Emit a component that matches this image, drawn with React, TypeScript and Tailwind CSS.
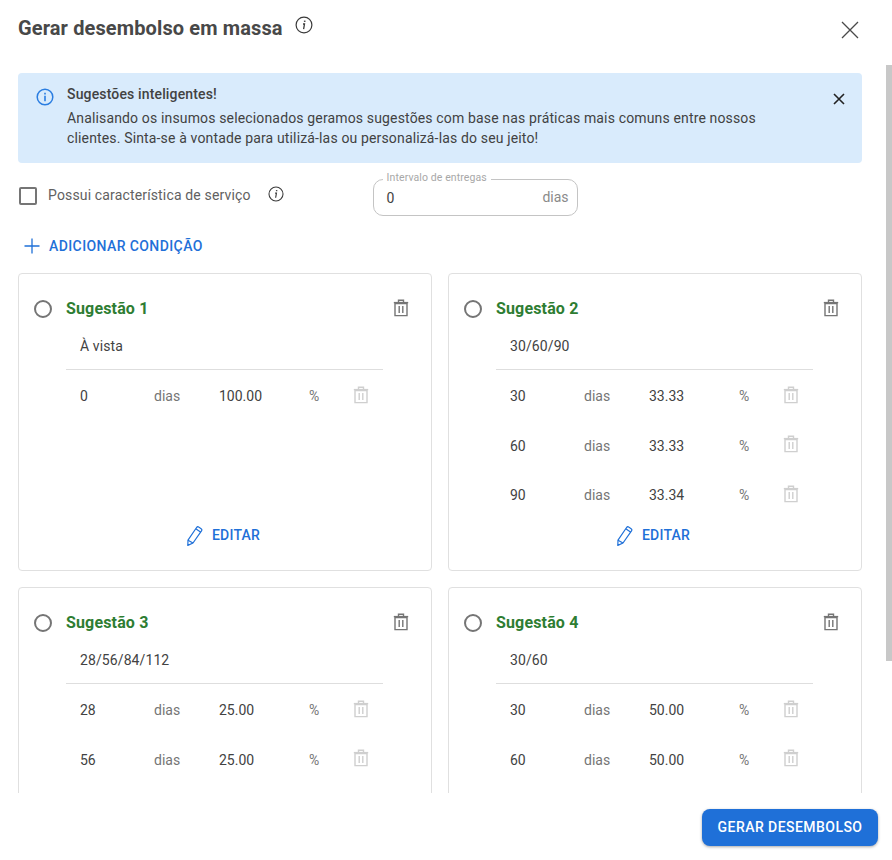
const font = { fontFamily: "Roboto, 'Liberation Sans', sans-serif" };

type Row = { days: string; pct: string };
type Sugestao = { title: string; name: string; rows: Row[]; editar: boolean };

const sugestoes: Sugestao[] = [
  { title: "Sugestão 1", name: "À vista", editar: true, rows: [{ days: "0", pct: "100.00" }] },
  {
    title: "Sugestão 2",
    name: "30/60/90",
    editar: true,
    rows: [
      { days: "30", pct: "33.33" },
      { days: "60", pct: "33.33" },
      { days: "90", pct: "33.34" },
    ],
  },
  {
    title: "Sugestão 3",
    name: "28/56/84/112",
    editar: false,
    rows: [
      { days: "28", pct: "25.00" },
      { days: "56", pct: "25.00" },
    ],
  },
  {
    title: "Sugestão 4",
    name: "30/60",
    editar: false,
    rows: [
      { days: "30", pct: "50.00" },
      { days: "60", pct: "50.00" },
    ],
  },
];

function InfoItalic({ size }: { size: number }) {
  return (
    <svg width={size} height={size} viewBox="0 0 18 18" fill="none" stroke="#3a3a3a">
      <circle cx="9" cy="9" r="7.9" strokeWidth="1.2" />
      <path d="M9.7 4.6v1.3" strokeWidth="1.6" />
      <path d="M8 8h1.5l-.9 5.2" strokeWidth="1.3" />
    </svg>
  );
}

function Trash({ color }: { color: string }) {
  return (
    <svg width="16" height="18" viewBox="0 0 16 18" fill="none" stroke={color} strokeWidth="1.4">
      <path d="M2 4.5h12V16.6H2z" />
      <path d="M0.8 3.6h14.4" />
      <path d="M5.5 3.3V1.2h5v2.1" />
      <path d="M6.2 7v7M9.8 7v7" />
    </svg>
  );
}

function Pencil() {
  return (
    <svg width="16" height="20" viewBox="0 0 16 20" fill="none" stroke="#1f70d8" strokeWidth="1.2" strokeLinejoin="round">
      <path d="M0.8 19.4l.2-5.2L9.6 1.5c.5-.7 1.4-.9 2.1-.4l2.4 1.6c.7.5.9 1.4.4 2.1L6 17z" />
      <path d="M1 14.2l5 2.8M8.8 2.8l5 3.4" />
    </svg>
  );
}

function Card({ s }: { s: Sugestao }) {
  return (
    <div className="h-[298px] shrink-0 rounded border border-[#e0e0e0] bg-white relative">
      <div className="flex items-center h-[69px] pl-[15px] pr-[22px]">
        <span className="w-[18px] h-[18px] rounded-full border-2 border-[#757575] mr-[14px] mt-[1px]" />
        <span className="text-[16px] font-bold tracking-[0.15px] text-[#2e7d32] flex-1 mt-[1px]">{s.title}</span>
        <span className="-mt-[1px]">
          <Trash color="#757575" />
        </span>
      </div>
      <div className="ml-[47px] w-[317px] h-[31px] border-b border-[#dedede] pl-[14px] text-[14px] tracking-[0.1px] text-[#424242] -mt-[4px]">
        <div className="leading-[14px] -mt-[1px]">{s.name}</div>
      </div>
      <div className="ml-[47px] w-[317px] mt-[2px]">
        {s.rows.map((r) => (
          <div key={r.days} className="flex items-center h-[49.5px] text-[14px]">
            <span className="w-[88px] pl-[14px] text-[#424242]">{r.days}</span>
            <span className="w-[65px] text-[#757575]">dias</span>
            <span className="w-[90px] text-[#424242]">{r.pct}</span>
            <span className="w-[44px] text-[#757575]">%</span>
            <span className="-mt-[4px]">
              <Trash color="#cfcfcf" />
            </span>
          </div>
        ))}
      </div>
      {s.editar && (
        <div className="absolute left-0 right-0 top-[251px] flex items-center justify-center gap-[9px] pr-[3px]">
          <Pencil />
          <span className="text-[14px] font-medium tracking-[0.2px] text-[#1f70d8]">EDITAR</span>
        </div>
      )}
    </div>
  );
}

export default function App() {
  return (
    <div className="w-[892px] h-[860px] bg-white relative overflow-hidden" style={font}>
      <header className="h-[65px] flex items-start pl-[18px] pr-[32px]">
        <h1 className="text-[20px] font-bold tracking-[0.12px] text-[#484848] leading-[23px] mt-[17px]">Gerar desembolso em massa</h1>
        <span className="ml-[12px] mt-[16px]">
          <InfoItalic size={18} />
        </span>
        <svg className="ml-auto mt-[20px]" width="20" height="20" viewBox="0 0 20 20" stroke="#4a4a4a" strokeWidth="1.3" fill="none">
          <path d="M2 2l16 16M18 2L2 18" />
        </svg>
      </header>

      <div className="h-[728px] overflow-hidden relative pl-[18px] pr-[30px] pt-[8px]">
        <div className="h-[90px] rounded bg-[#d9ebfc] flex pl-[18px] pr-[16px] pt-[13px]">
          <svg className="mt-[2px] shrink-0" width="18" height="18" viewBox="0 0 18 18" fill="none" stroke="#2a7de1">
            <circle cx="9" cy="9" r="7.8" strokeWidth="1.5" />
            <path d="M9 4.8v1.7M9 7.8v5.4" strokeWidth="1.6" />
          </svg>
          <div className="ml-[13px] flex-1 text-[14px] tracking-[0.15px] text-[#424242] leading-[20px]">
            <div className="font-medium leading-[16px] mb-[6px]">Sugestões inteligentes!</div>
            <div className="w-[720px]">
              Analisando os insumos selecionados geramos sugestões com base nas práticas mais comuns entre nossos clientes. Sinta-se à vontade para utilizá-las ou personalizá-las do seu jeito!
            </div>
          </div>
          <svg className="mt-[6px] shrink-0" width="14" height="14" viewBox="0 0 14 14" stroke="#222" strokeWidth="1.6" fill="none">
            <path d="M2 2l10 10M12 2L2 12" />
          </svg>
        </div>

        <div className="flex items-start mt-[16px] h-[37px]">
          <span className="mt-[8px] ml-[1px] w-[18px] h-[18px] rounded-[2px] border-2 border-[#757575]" />
          <span className="ml-[11px] mt-[8px] text-[14px] tracking-[0.15px] text-[#616161] leading-[16px]">Possui característica de serviço</span>
          <span className="ml-[17px] mt-[7px]">
            <InfoItalic size={16} />
          </span>
          <div className="ml-[89px] relative w-[205px] h-[37px] rounded-[10px] border border-[#c4c4c4] flex items-center justify-between pl-[13px] pr-[8px]">
            <span className="absolute left-[9px] -top-[8px] bg-white px-[4px] text-[10.5px] tracking-[0.1px] leading-[12px] text-[#a8a8a8]">Intervalo de entregas</span>
            <span className="text-[14px] text-[#424242] mt-[1px]">0</span>
            <span className="text-[14px] text-[#8a8a8a]">dias</span>
          </div>
        </div>

        <div className="flex items-center mt-[21px] h-[18px] pl-[6px]">
          <svg width="16" height="16" viewBox="0 0 16 16" stroke="#1f70d8" strokeWidth="1.3" fill="none">
            <path d="M8 0.5v15M0.5 8h15" />
          </svg>
          <span className="ml-[9px] text-[14px] font-medium tracking-[0.4px] text-[#1f70d8]">ADICIONAR CONDIÇÃO</span>
        </div>

        <div className="grid grid-cols-2 gap-x-[16px] gap-y-[16px] mt-[18px]">
          {sugestoes.map((s) => (
            <Card key={s.title} s={s} />
          ))}
        </div>
      </div>

      {/* barra de rolagem */}
      <div className="absolute right-0 top-[65px] w-[6px] h-[596px] bg-[#c8c8c8]" />

      <div className="flex justify-end pr-[14px] pt-[16px]">
        <button
          type="button"
          className="w-[176px] h-[37px] rounded-[8px] bg-[#1f70d8] text-white text-[14px] font-medium tracking-[0.45px] shadow-[0_1px_3px_rgba(0,0,0,0.35)]"
        >
          GERAR DESEMBOLSO
        </button>
      </div>
    </div>
  );
}
